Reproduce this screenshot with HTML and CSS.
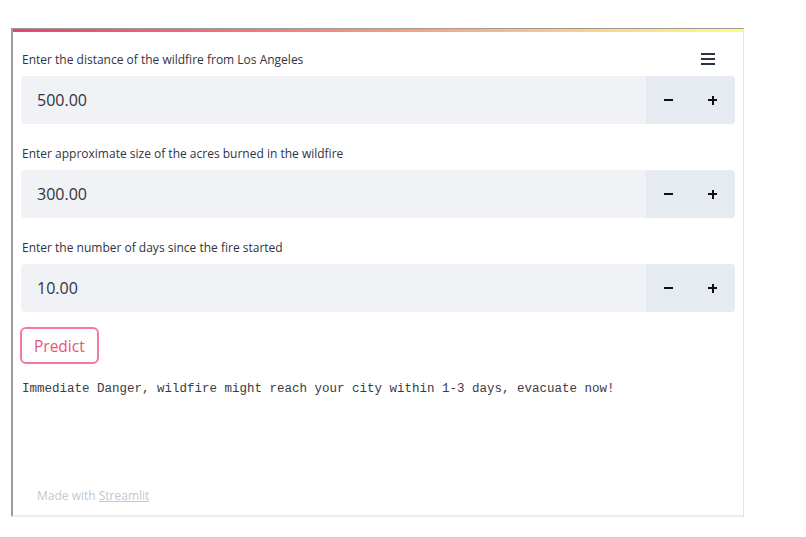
FILE: index.html
```html
<!DOCTYPE html>
<html lang="en">
<head>
  <meta charset="UTF-8">
  <meta name="viewport" content="width=device-width, initial-scale=1.0">
  <title>Wildfire Predictor</title>
  <link rel="stylesheet" href="styles.css">
</head>
<body>
  <div class="frame">
    <div class="decoration"></div>
    <button class="menu" aria-label="Menu">
      <svg width="16" height="14" viewBox="0 0 16 14"><path d="M1 2h14M1 7h14M1 12h14" stroke="#31333f" stroke-width="1.8" fill="none"/></svg>
    </button>

    <div class="main">
      <div class="field">
        <label>Enter the distance of the wildfire from Los Angeles</label>
        <div class="number-input">
          <input type="text" value="500.00">
          <div class="steps">
            <button class="step"><span class="minus"></span></button>
            <button class="step"><span class="plus"></span></button>
          </div>
        </div>
      </div>

      <div class="field">
        <label>Enter approximate size of the acres burned in the wildfire</label>
        <div class="number-input">
          <input type="text" value="300.00">
          <div class="steps">
            <button class="step"><span class="minus"></span></button>
            <button class="step"><span class="plus"></span></button>
          </div>
        </div>
      </div>

      <div class="field">
        <label>Enter the number of days since the fire started</label>
        <div class="number-input">
          <input type="text" value="10.00">
          <div class="steps">
            <button class="step"><span class="minus"></span></button>
            <button class="step"><span class="plus"></span></button>
          </div>
        </div>
      </div>

      <button class="predict">Predict</button>

      <pre class="result">Immediate Danger, wildfire might reach your city within 1-3 days, evacuate now!</pre>
    </div>

    <footer>Made with <a href="#">Streamlit</a></footer>
  </div>
</body>
</html>
```

FILE: styles.css
```css
/* Base Reset */
body, pre {
  margin: 0;
  padding: 0;
}
body {
  font-family: 'Open Sans', 'Noto Sans', sans-serif;
  background: #fff;
  color: #31333f;
}

/* Frame */
.frame {
  position: relative;
  box-sizing: border-box;
  margin: 28px 0 0 11px;
  width: 733px;
  height: 489px;
  border-top: 1px solid #9c9c9c;
  border-left: 2px solid #9c9c9c;
  border-right: 1px solid #e4e4e4;
  border-bottom: 2px solid #ececec;
  display: flex;
  flex-direction: column;
}

.decoration {
  height: 3px;
  background: linear-gradient(90deg, #e8436f 0%, #f3847b 40%, #fbc98a 75%, #fffd80 100%);
}

.menu {
  position: absolute;
  top: 23px;
  right: 27px;
  border: none;
  background: none;
  padding: 0;
  cursor: pointer;
}

.main {
  padding: 18px 8px 0 8px;
  flex: 1;
}

/* Number inputs */
.field {
  margin-bottom: 20px;
}

.field label {
  display: block;
  font-size: 12px;
  line-height: 20px;
  color: #31333f;
  padding-left: 1px;
  margin-bottom: 6px;
}

.number-input {
  display: flex;
  height: 48px;
  border-radius: 4px;
  overflow: hidden;
  background: #f0f2f6;
}

.number-input input {
  flex: 1;
  border: none;
  background: transparent;
  font-family: inherit;
  font-size: 16px;
  color: #31333f;
  padding: 0 16px;
  outline: none;
}

.steps {
  display: flex;
  width: 89px;
  background: #e6eaf1;
}

.step {
  flex: 1;
  border: none;
  background: none;
  display: flex;
  align-items: center;
  justify-content: center;
  cursor: pointer;
  position: relative;
}

.minus, .plus {
  display: block;
  width: 9px;
  height: 2px;
  background: #111;
  position: relative;
}

.plus::after {
  content: "";
  position: absolute;
  left: 3.5px;
  top: -3.5px;
  width: 2px;
  height: 9px;
  background: #111;
}

/* Predict */
.predict {
  margin: -5px 0 0 -1px;
  height: 37px;
  padding: 0 12px;
  border: 2px solid #f57a98;
  border-radius: 6px;
  background: #fff;
  color: #e8527b;
  font-family: inherit;
  font-size: 15.5px;
  cursor: pointer;
}

.result {
  margin-top: 15px;
  padding-left: 1px;
  font-family: 'Liberation Mono', monospace;
  font-size: 12.5px;
  line-height: 20px;
  color: #3a3b44;
}

/* Footer */
footer {
  padding: 0 0 9px 24px;
  font-size: 12px;
  line-height: 20px;
  color: #c4c7cf;
}

footer a {
  color: #c4c7cf;
}
```
